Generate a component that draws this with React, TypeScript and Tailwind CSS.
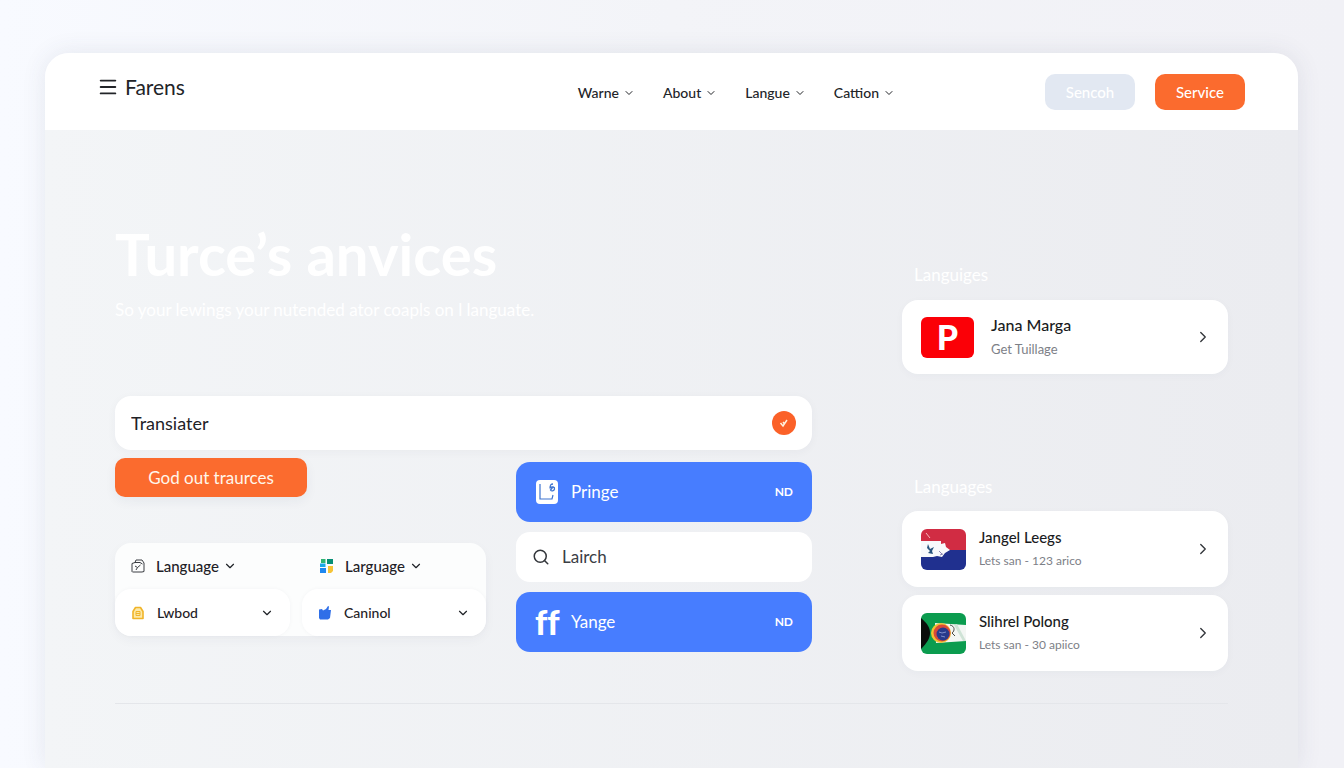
import { ReactNode } from "react";
import { ChevronDown, ChevronRight, Menu, Search } from "lucide-react";

interface SelectFieldProps {
  label: string;
  icon: ReactNode;
  compact?: boolean;
  className: string;
}

interface LanguageCardProps {
  name: string;
  detail: string;
  flag: ReactNode;
  featured?: boolean;
}

const navItems = ["Warne", "About", "Langue", "Cattion"];

const BoxIcon = () => (
  <svg viewBox="0 0 14 14" className="w-[14px] h-[14px]" fill="none" stroke="#3a3d42" strokeWidth="1" aria-hidden="true">
    <path d="M1 4.5 4 3.500 5 1h6l2 3v8.500l-2 .5H1.500L1 12.500Z" strokeLinejoin="round" />
    <path d="M4 3.500h5L11.500 5M4 7l2.500 1.500L9.500 6M6.500 8.500 5 11" />
  </svg>
);

const TilesIcon = () => (
  <svg viewBox="0 0 14 14" className="w-[14px] h-[14px]" aria-hidden="true">
    <path d="M1 0h4.500v4H1z" fill="#2fb574" />
    <path d="M7 0h6v5H7z" fill="#078f76" />
    <path d="M0 4.500h5.500V8H0z" fill="#19a9e8" />
    <path d="M0 9h6v5H0z" fill="#1e88f0" />
    <path d="M8 7h5v5l-2 2H8z" fill="#f6c437" />
  </svg>
);

const BagIcon = () => (
  <svg viewBox="0 0 14 14" className="w-[14px] h-[14px]" fill="none" stroke="#f0b429" strokeWidth="1.6" aria-hidden="true">
    <path d="M2 5.500 4.500 1.500h5L12 5.500v7H2Z" fill="#fde9a8" strokeLinejoin="round" />
    <path d="M5 5.500h4v4H5zM5 7.500h4" strokeWidth="1" />
  </svg>
);

const ThumbIcon = () => (
  <svg viewBox="0 0 14 14" className="w-[14px] h-[14px]" fill="#2f6fe8" aria-hidden="true">
    <path d="M1 3.500 4 3l1 1.500L8 3l2-3 1 .5L10.500 4H13l-1 8-2 1.500H2L1 12Z" />
  </svg>
);

const CheckIcon = () => (
  <svg viewBox="0 0 10 10" className="w-[10px] h-[10px]" fill="none" stroke="#fff3e0" strokeWidth="1.500" aria-hidden="true">
    <path d="m1.500 5 2.500 3 4-6M4 4l1.500 2" />
  </svg>
);

const PringeIcon = () => (
  <svg viewBox="0 0 24 24" className="w-6 h-6" fill="none" aria-hidden="true">
    <rect x="1" y="0" width="22" height="24" rx="4" fill="#fff" />
    <path d="M5 4v15h12l1-4" stroke="#3f74cf" strokeWidth="1.200" />
    <path d="M18 4c-3 0-3 2-3 4.500M15 8c2-2 5-1 4.500 1s-3 2.500-4 1l2-2.500" stroke="#3f74cf" strokeWidth="1.300" />
  </svg>
);

const RedBlueFlag = () => (
  <svg viewBox="0 0 45 41" className="w-[45px] h-[41px] rounded-md" aria-hidden="true">
    <path d="M0 0h45v21H0z" fill="#d12c43" />
    <path d="M0 21h45v20H0z" fill="#20308f" />
    <path d="M0 12h20v3l4-1 1 4 4 3-5 3-3 4-5-1-4 1H0Z" fill="#f8f9fc" />
    <path d="m5 4 4 5" stroke="#f4b8bd" strokeWidth="1" />
    <path d="m7 15 2 5 4-2-2 4 1 3-5-1 2-2-3-3Z" fill="#26527d" />
    <path d="m18 22 3 3M19 26l3-1" stroke="#8a86b4" strokeWidth="1" />
  </svg>
);

const GreenFlag = () => (
  <svg viewBox="0 0 45 41" className="w-[45px] h-[41px] rounded-md" aria-hidden="true">
    <path d="M0 0h45v41H0z" fill="#0b9c4f" />
    <path d="M14 10 45 12v16l-30 2Z" fill="#f3f6f3" />
    <path d="M0 5c7 6 9 10 9 15s-3 10-9 16Z" fill="#0a0c0a" />
    <path d="m33 12 3-1 9 17h-3Z" fill="#cfe3d6" />
    <circle cx="20" cy="20" r="10" fill="#f1c232" />
    <circle cx="21" cy="20" r="8.500" fill="#d94a38" />
    <circle cx="22" cy="21" r="6.500" fill="#283a8c" />
    <path d="m18 19 3 1 4-1M20 23l4 1" stroke="#7f8ecb" strokeWidth="1" fill="none" />
    <path d="M29 12c5 1 5 6 2 8l3 3" stroke="#4a4a44" strokeWidth="1" fill="none" />
  </svg>
);

const SelectField = ({ label, icon, compact, className }: SelectFieldProps) => (
  <label className={`flex items-center ${className}`}>
    {icon}
    <select
      aria-label={label}
      className={`appearance-none bg-transparent font-medium text-[#1f2227] outline-none ${compact ? "ml-[11px] text-[15px] field-sizing-content" : "ml-3 text-sm flex-1 min-w-0"}`}
    >
      <option>{label}</option>
    </select>
    <ChevronDown className="w-[14px] h-[14px] ml-1 shrink-0 text-[#1f2227]" />
  </label>
);

const LanguageCard = ({ name, detail, flag, featured }: LanguageCardProps) => (
  <a
    href="#"
    className={`flex items-center bg-white rounded-2xl pl-[19px] pr-4 shadow-[0_2px_8px_rgba(40,50,80,0.03)] ${featured ? "h-[74px] gap-[17px]" : "h-[76px] gap-[13px]"}`}
  >
    {flag}
    <span className="flex-1 flex flex-col gap-1">
      <span className={`leading-5 font-medium text-[#1a1c22] ${featured ? "text-base" : "text-[15px]"}`}>{name}</span>
      <span className={`leading-5 text-[#7d8087] ${featured ? "text-[13px]" : "text-xs"}`}>{detail}</span>
    </span>
    <ChevronRight className="w-[18px] h-[18px] text-[#33363b]" strokeWidth={1.8} />
  </a>
);

const App = () => {
  return (
    <div className="min-h-screen flex flex-col pt-[53px] pl-[45px] pr-[46px] font-['Lato',sans-serif] bg-linear-to-r from-[#f8faff] via-[#f3f4f8] to-[#f1f1f6]">
      <div className="flex-1 flex flex-col rounded-t-3xl overflow-hidden shadow-[0_0_24px_rgba(60,70,100,0.10)]">
        <header className="flex items-center h-[77px] bg-white pt-px pl-[52px] pr-[53px]">
          <a href="#" className="flex items-center gap-1.5 pb-2.5 text-[21px] text-[#222428]">
            <Menu className="w-[22px] h-[22px]" />
            Farens
          </a>
          <nav className="flex items-center gap-7 ml-auto">
            {navItems.map((item) => (
              <button key={item} className="flex items-center gap-1 pt-px text-sm font-medium text-[#222428]">
                {item}
                <ChevronDown className="w-3 h-3" />
              </button>
            ))}
          </nav>
          <div className="flex gap-5 ml-[150px]">
            <button className="w-[90px] h-9 rounded-[10px] bg-[#e2e8f2] text-[15px] font-medium text-white">Sencoh</button>
            <button className="w-[90px] h-9 rounded-[10px] bg-[#fb6b2e] text-[15px] font-medium text-white">Service</button>
          </div>
        </header>

        <main className="flex-1 bg-linear-to-r from-[#f3f5f7] to-[#ebecf0] px-[70px]">
          <div className="grid grid-cols-[minmax(0,1fr)_326px] gap-x-[90px] pb-8 border-b border-[#e4e6ea]">
            <section className="pt-[92px]">
              <h1 className="text-[58px] leading-[64px] font-bold text-white">Turce’s anvices</h1>
              <p className="mt-3 text-[17px] leading-6 text-white">
                So your lewings your nutended ator coapls on l languate.
              </p>

              <form className="mt-[74px] flex items-center h-[54px] rounded-2xl bg-white px-4 shadow-[0_2px_10px_rgba(40,50,80,0.04)]">
                <input
                  aria-label="Translate"
                  defaultValue="Transiater"
                  className="flex-1 min-w-0 text-lg text-[#1f2227] outline-none"
                />
                <button type="button" aria-label="Confirm" className="flex items-center justify-center w-6 h-6 rounded-full bg-[#fb6128]">
                  <CheckIcon />
                </button>
              </form>

              <div className="flex justify-between">
                <div className="pt-2">
                  <button className="w-48 h-[39px] rounded-[10px] bg-[#fb6b2e] text-[17px] text-[#fff6ea] shadow-[0_4px_12px_rgba(40,50,80,0.06)]">
                    God out traurces
                  </button>
                  <div className="mt-[46px] grid grid-cols-[175px_184px] gap-x-3 rounded-2xl bg-[#fcfdfd] shadow-[0_4px_12px_rgba(40,50,80,0.04)]">
                    <SelectField label="Language" icon={<BoxIcon />} compact className="h-[46px] pl-4" />
                    <SelectField label="Larguage" icon={<TilesIcon />} compact className="h-[46px] pl-[18px]" />
                    <SelectField label="Lwbod" icon={<BagIcon />} className="h-[47px] px-4 rounded-2xl bg-white shadow-[0_0_4px_rgba(40,50,80,0.04)]" />
                    <SelectField label="Caninol" icon={<ThumbIcon />} className="h-[47px] px-4 rounded-2xl bg-white shadow-[0_0_4px_rgba(40,50,80,0.04)]" />
                  </div>
                </div>

                <div className="w-[296px] pt-3 flex flex-col gap-[10px]">
                  <button className="flex items-center h-[60px] rounded-[14px] bg-[#477dff] px-[19px] text-white">
                    <PringeIcon />
                    <span className="ml-3 flex-1 text-left text-[17px]">Pringe</span>
                    <span className="text-xs font-bold">ND</span>
                  </button>
                  <label className="flex items-center h-[50px] rounded-[14px] bg-white px-4">
                    <Search className="w-[18px] h-[18px] text-[#33363b]" />
                    <input
                      aria-label="Search"
                      defaultValue="Lairch"
                      className="ml-3 flex-1 min-w-0 text-[17px] text-[#3b3e45] outline-none"
                    />
                  </label>
                  <button className="flex items-center h-[60px] rounded-[14px] bg-[#477dff] px-[19px] text-white">
                    <span className="w-6 text-[34px] leading-none font-black [font-variant-ligatures:none]">ff</span>
                    <span className="ml-3 flex-1 text-left text-[17px]">Yange</span>
                    <span className="text-xs font-bold">ND</span>
                  </button>
                </div>
              </div>
            </section>

            <aside className="pt-[133px]">
              <h2 className="pl-3 text-[17px] leading-6 text-white">Languiges</h2>
              <div className="mt-[13px]">
                <LanguageCard
                  name="Jana Marga"
                  detail="Get Tuillage"
                  featured
                  flag={
                    <span className="flex items-center justify-center w-[53px] h-[41px] rounded-md bg-[#fb0007] text-[34px] leading-none font-black text-white">
                      P
                    </span>
                  }
                />
              </div>
              <h2 className="mt-[101px] pl-3 text-[17px] leading-6 text-white">Languages</h2>
              <div className="mt-3 flex flex-col gap-2">
                <LanguageCard name="Jangel Leegs" detail="Lets san - 123 arico" flag={<RedBlueFlag />} />
                <LanguageCard name="Slihrel Polong" detail="Lets san - 30 apiico" flag={<GreenFlag />} />
              </div>
            </aside>
          </div>
        </main>
      </div>
    </div>
  );
};

export default App;
